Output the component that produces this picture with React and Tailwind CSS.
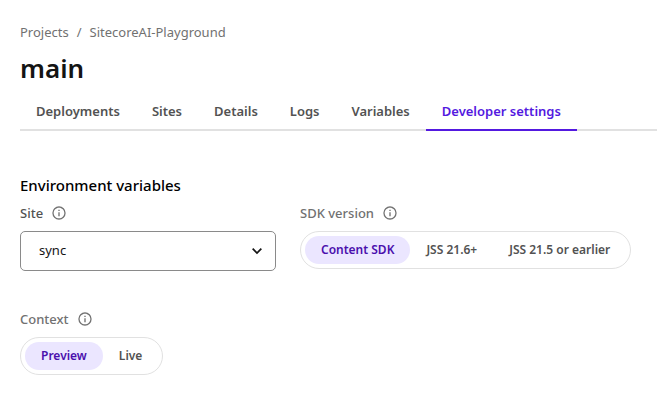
import React, { useState } from "react";

const TABS = ["Deployments", "Sites", "Details", "Logs", "Variables", "Developer settings"];

function InfoIcon() {
    return (
        <svg viewBox="0 0 24 24" className="w-4 h-4 text-[#717171]" fill="currentColor" aria-hidden="true">
            <path d="M11 9h2V7h-2m1 13c-4.41 0-8-3.59-8-8s3.59-8 8-8 8 3.59 8 8-3.59 8-8 8m0-18A10 10 0 0 0 2 12a10 10 0 0 0 10 10 10 10 0 0 0 10-10A10 10 0 0 0 12 2m-1 15h2v-6h-2v6z" />
        </svg>
    );
}

function ButtonGroup({ labelId, options, value, onChange }) {
    return (
        <div
            role="group"
            aria-labelledby={labelId}
            className="flex w-fit rounded-full border border-[#e1e1e1] p-1"
        >
            {options.map((option) => (
                <button
                    key={option}
                    type="button"
                    aria-pressed={option === value}
                    onClick={() => onChange(option)}
                    className={
                        option === value
                            ? "h-7 px-4 rounded-full text-xs font-semibold whitespace-nowrap bg-[#ebe6ff] text-[#4a0fad]"
                            : "h-7 px-4 rounded-full text-xs font-semibold whitespace-nowrap text-[#525252]"
                    }
                >
                    {option}
                </button>
            ))}
        </div>
    );
}

export default function App() {
    const [tab, setTab] = useState("Developer settings");
    const [sdk, setSdk] = useState("Content SDK");
    const [context, setContext] = useState("Preview");

    return (
        <main className="bg-white pt-[22px] pl-5 font-['Noto_Sans',sans-serif]">
            <nav aria-label="Breadcrumb" className="flex gap-2 text-[13px] leading-5 text-[#717171]">
                <a href="#projects">Projects</a>
                <span>/</span>
                <a href="#playground">SitecoreAI-Playground</a>
            </nav>

            <h1 className="mt-2 text-[26px] leading-9 font-semibold text-[#141414]">main</h1>

            <div role="tablist" className="mt-1 flex border-b-2 border-[#e1e1e1]">
                {TABS.map((name) => (
                    <button
                        key={name}
                        type="button"
                        role="tab"
                        aria-selected={name === tab}
                        onClick={() => setTab(name)}
                        className={
                            name === tab
                                ? "-mb-0.5 h-[41px] pt-1 px-4 border-b-2 border-[#5319e0] text-[13px] font-semibold whitespace-nowrap text-[#5319e0]"
                                : "-mb-0.5 h-[41px] pt-1 px-4 border-b-2 border-transparent text-[13px] font-semibold whitespace-nowrap text-[#525252]"
                        }
                    >
                        {name}
                    </button>
                ))}
            </div>

            <h2 className="mt-[42px] text-[15px] leading-6 font-medium text-black">Environment variables</h2>

            <div className="mt-1.5 flex gap-6">
                <div className="w-64">
                    <div className="flex items-center gap-2 mb-2">
                        <label htmlFor="site" className="text-[13px] leading-5 font-medium text-[#525252]">Site</label>
                        <InfoIcon />
                    </div>
                    <div className="grid items-center">
                        <select
                            id="site"
                            className="col-start-1 row-start-1 h-10 w-full appearance-none rounded-[5px] border border-[#8a8a8a] bg-white px-[18px] text-[13px] text-[#141414]"
                        >
                            <option>sync</option>
                        </select>
                        <svg
                            viewBox="0 0 24 24"
                            className="col-start-1 row-start-1 justify-self-end mr-[11px] w-4 h-4 pointer-events-none"
                            fill="none"
                            stroke="#141414"
                            strokeWidth="2.6"
                            aria-hidden="true"
                        >
                            <path d="m5.500 8.500 6.500 6.500 6.500-6.500" />
                        </svg>
                    </div>
                </div>

                <div>
                    <div className="flex items-center gap-2 mb-2">
                        <span id="sdk-label" className="text-[13px] leading-5 font-medium text-[#717171]">SDK version</span>
                        <InfoIcon />
                    </div>
                    <ButtonGroup
                        labelId="sdk-label"
                        options={["Content SDK", "JSS 21.6+", "JSS 21.5 or earlier"]}
                        value={sdk}
                        onChange={setSdk}
                    />
                </div>
            </div>

            <div className="mt-[38px]">
                <div className="flex items-center gap-2 mb-2">
                    <span id="context-label" className="text-[13px] leading-5 font-medium text-[#717171]">Context</span>
                    <InfoIcon />
                </div>
                <ButtonGroup
                    labelId="context-label"
                    options={["Preview", "Live"]}
                    value={context}
                    onChange={setContext}
                />
            </div>
        </main>
    );
}
